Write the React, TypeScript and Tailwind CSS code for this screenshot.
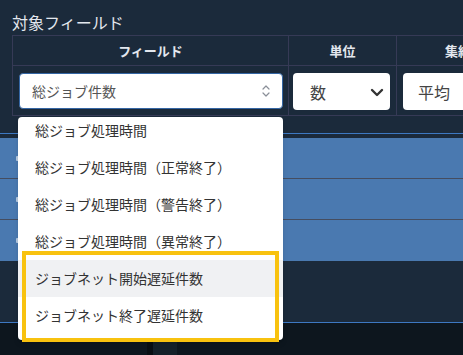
import React from 'react';

const font = { fontFamily: '"Noto Sans CJK JP", "Noto Sans", sans-serif' };

const options = [
    '総ジョブ処理時間',
    '総ジョブ処理時間（正常終了）',
    '総ジョブ処理時間（警告終了）',
    '総ジョブ処理時間（異常終了）',
    'ジョブネット開始遅延件数',
    'ジョブネット終了遅延件数',
];

const UpDown = () => (
    <svg width="8" height="12" viewBox="0 0 8 12" fill="none" stroke="#8a8f98" strokeWidth="1.2" strokeLinecap="round" strokeLinejoin="round">
        <path d="M1 4l3-3 3 3" />
        <path d="M1 8l3 3 3-3" />
    </svg>
);

const ChevronDown = () => (
    <svg width="14" height="10" viewBox="0 0 14 10" fill="none" stroke="#333" strokeWidth="2.4" strokeLinecap="round" strokeLinejoin="round">
        <path d="M2 3l5 5 5-5" />
    </svg>
);

export default function App() {
    return (
        <div className="relative w-[463px] h-[355px] overflow-hidden bg-[#1b2a3b] text-[#e3e7ee]" style={font}>
            <div className="pl-[12px] pt-[11px] h-[35px] text-[16px] leading-[22px]">対象フィールド</div>

            <div className="ml-[12px] border-l border-t border-[#363a56]">
                <div className="grid grid-cols-[276px_108px_1fr] h-[30px] border-b border-[#363a56] text-[13px] font-bold">
                    <div className="flex items-center justify-center border-r border-[#363a56]">フィールド</div>
                    <div className="flex items-center justify-center border-r border-[#363a56]">単位</div>
                    <div className="flex items-center pl-[48px] whitespace-nowrap">集約</div>
                </div>
                <div className="grid grid-cols-[276px_108px_1fr] h-[50px] border-b border-[#363a56]">
                    <div className="border-r border-[#363a56] pl-[6px] pr-[5px] pt-[7px]">
                        <div className="h-[36px] bg-white rounded-[4px] border border-[#3466a4] flex items-center justify-between pl-[12px] pr-[12px] text-[14px] text-[#555]">
                            <span>総ジョブ件数</span>
                            <UpDown />
                        </div>
                    </div>
                    <div className="border-r border-[#363a56] pl-[4px] pr-[6px] pt-[7px]">
                        <div className="h-[37px] bg-white rounded-[4px] flex items-center justify-between pl-[17px] pr-[6px] text-[16px] text-[#444]">
                            <span>数</span>
                            <ChevronDown />
                        </div>
                    </div>
                    <div className="pl-[6px] pt-[7px]">
                        <div className="h-[37px] bg-white rounded-l-[4px] flex items-center pl-[15px] text-[16px] text-[#444]">平均</div>
                    </div>
                </div>
            </div>

            <div className="h-[17px]" />
            <div className="h-px bg-[#3d78c2]" />
            <div className="h-[4px]" />
            <div className="bg-[#4a79b0]">
                {[0, 1, 2].map((i) => (
                    <div key={i} className={`h-[41px] flex items-center pl-[16px] ${i < 2 ? 'border-b border-[#454d60]' : ''}`}>
                        <div className="w-[3px] h-[5px] bg-white/60 rounded-[1px]" />
                    </div>
                ))}
            </div>
            <div className="h-[62px] border-b border-[#3d78c2]" />
            <div className="h-[40px] bg-[#0d161e] flex">
                <div className="w-[147px]" />
                <div className="w-[6px] bg-[#080e13]" />
                <div className="w-[24px] bg-[#142029]" />
            </div>

            <div className="absolute left-[18px] top-[117px] w-[265px] h-[223px] bg-white rounded-[4px] overflow-hidden shadow-md text-[14px] text-[#333]">
                <div className="-mt-[5px]">
                    {options.map((o, i) => (
                        <div key={o} className={`h-[37px] flex items-center pl-[17px] ${i === 4 ? 'bg-[#f0f1f3]' : ''}`}>{o}</div>
                    ))}
                </div>
            </div>

            <div className="absolute left-[22px] top-[251px] w-[257px] h-[91px] border-[4px] border-[#f8c20f]" />
        </div>
    );
}
